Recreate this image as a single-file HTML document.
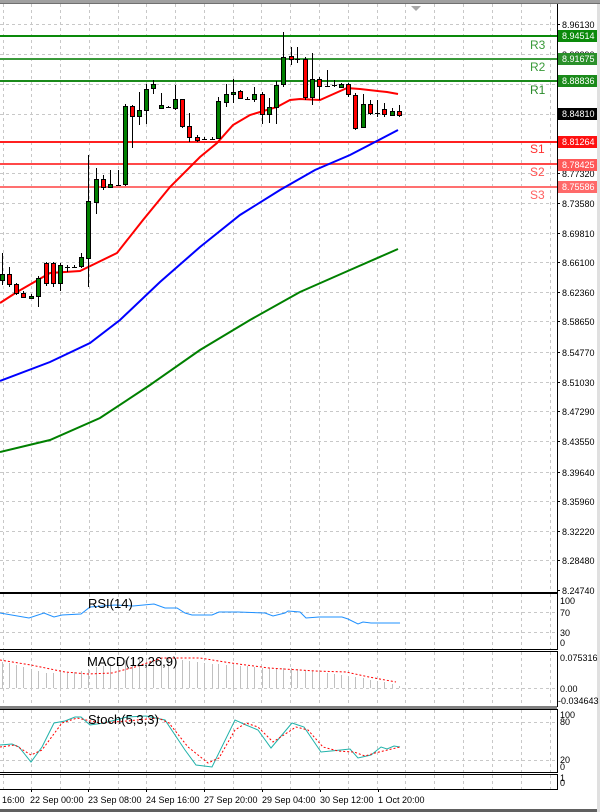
<!DOCTYPE html>
<html><head><meta charset="utf-8"><style>
body{margin:0;background:#fff;width:600px;height:812px;overflow:hidden}
svg{display:block;font-family:"Liberation Sans",sans-serif}
</style></head><body>
<svg width="600" height="812" viewBox="0 0 600 812" xmlns="http://www.w3.org/2000/svg">
<rect width="600" height="812" fill="#fff"/>
<rect x="0" y="0" width="600" height="4" fill="#a0a0a0"/>
<rect x="0" y="3" width="600" height="1" fill="#707070"/>
<polygon points="411,6 421,6 416,11" fill="#a8a8a8"/>
<!-- grid -->
<g stroke="#c8c8c8" stroke-dasharray="3,3" stroke-width="1">
<path d="M3.5 4V592M31.5 4V592M60.5 4V592M89.5 4V592M118.5 4V592M146.5 4V592M175.5 4V592M204.5 4V592M233.5 4V592M261.5 4V592M290.5 4V592M319.5 4V592M348.5 4V592M377.5 4V592M405.5 4V592M434.5 4V592M463.5 4V592M492.5 4V592M521.5 4V592M550.5 4V592"/>
<path d="M0 24.5H557M0 54.5H557M0 84.5H557M0 114.5H557M0 173.5H557M0 203.5H557M0 233.5H557M0 262.5H557M0 292.5H557M0 321.5H557M0 352.5H557M0 382.5H557M0 411.5H557M0 441.5H557M0 472.5H557M0 501.5H557M0 531.5H557M0 560.5H557"/>
<path d="M3.5 594V649M31.5 594V649M60.5 594V649M89.5 594V649M118.5 594V649M146.5 594V649M175.5 594V649M204.5 594V649M233.5 594V649M261.5 594V649M290.5 594V649M319.5 594V649M348.5 594V649M377.5 594V649M405.5 594V649M434.5 594V649M463.5 594V649M492.5 594V649M521.5 594V649M550.5 594V649"/>
<path d="M3.5 652V706M31.5 652V706M60.5 652V706M89.5 652V706M118.5 652V706M146.5 652V706M175.5 652V706M204.5 652V706M233.5 652V706M261.5 652V706M290.5 652V706M319.5 652V706M348.5 652V706M377.5 652V706M405.5 652V706M434.5 652V706M463.5 652V706M492.5 652V706M521.5 652V706M550.5 652V706"/>
<path d="M3.5 710V772M31.5 710V772M60.5 710V772M89.5 710V772M118.5 710V772M146.5 710V772M175.5 710V772M204.5 710V772M233.5 710V772M261.5 710V772M290.5 710V772M319.5 710V772M348.5 710V772M377.5 710V772M405.5 710V772M434.5 710V772M463.5 710V772M492.5 710V772M521.5 710V772M550.5 710V772"/>
<path d="M3.5 775V789M31.5 775V789M60.5 775V789M89.5 775V789M118.5 775V789M146.5 775V789M175.5 775V789M204.5 775V789M233.5 775V789M261.5 775V789M290.5 775V789M319.5 775V789M348.5 775V789M377.5 775V789M405.5 775V789M434.5 775V789M463.5 775V789M492.5 775V789M521.5 775V789M550.5 775V789"/>
<path d="M0 612.5H557M0 632.5H557M0 688.5H557M0 722.5H557M0 760.5H557"/>
</g>
<!-- S/R lines -->
<rect x="0" y="35" width="557" height="2" fill="#0a8a0a"/>
<rect x="0" y="58" width="557" height="2" fill="#3a9a3a"/>
<rect x="0" y="80" width="557" height="2" fill="#1a8a1a"/>
<rect x="0" y="141" width="557" height="2" fill="#ff2020"/>
<rect x="0" y="163" width="557" height="2" fill="#ff4848"/>
<rect x="0" y="186" width="557" height="2" fill="#ff7070"/>
<g font-size="12" >
<text x="530" y="49" fill="#3a9a3a">R3</text>
<text x="530" y="71" fill="#3a9a3a">R2</text>
<text x="530" y="94" fill="#2a8a2a">R1</text>
<text x="530" y="153" fill="#ff3030">S1</text>
<text x="530" y="176" fill="#ff5050">S2</text>
<text x="530" y="199" fill="#ff6060">S3</text>
</g>
<!-- MAs -->
<polyline fill="none" stroke="#008000" stroke-width="2" points="0,452 50,440 100,418 150,385 200,350 250,320 300,292 350,270 398,249"/>
<polyline fill="none" stroke="#0000ff" stroke-width="2" points="0,381 50,362 90,343 120,320 160,282 200,247 240,215 280,190 315,170 350,155 398,130"/>
<polyline fill="none" stroke="#ff0000" stroke-width="2" points="0,303 17,292 50,273 80,271 117,253 143,220 170,187 200,157 217,143 233,125 250,115 277,107 290,100 300,99 320,100 347,88 360,89 387,92 398,94"/>
<!-- candles wicks -->
<path stroke="#000" stroke-width="1" fill="none" d="M2.5 253V285M9.5 267V287M16.5 283V295M23.5 291V298M31.5 294V299M38.5 276V307M46.5 262V286M53.5 262V287M60.5 263V291M67.5 265V272M74.5 265V268M81.5 253V268M88.5 155V287M96.5 168V214M103.5 175V190M110.5 170V188M118.5 170V186M125.5 104V186M132.5 105V148M139.5 92V125M146.5 84V124M153.5 80V94M161.5 93V109M168.5 106V108M175.5 85V110M182.5 99V128M189.5 113V142M197.5 135V142M204.5 137V140M212.5 137V140M218.5 97V139M226.5 84V107M233.5 79V103M240.5 90V99M247.5 97V100M254.5 87V102M262.5 92V124M269.5 98V123M276.5 81V124M283.5 32V87M291.5 47V65M297.5 47V63M305.5 57V100M312.5 53V105M319.5 77V100M327.5 70V87M334.5 80V87M341.5 83V88M348.5 83V97M355.5 93V130M363.5 94V128M370.5 100V115M377.5 100V117M384.5 103V117M392.5 108V116M399.5 105V117
M65 267.5H70M72 267.5H77M116 185.5H121M166 107.5H171M202 139.5H207M210 139.5H215M245 99.5H250M295 59.5H300M325 86.5H330M332 85.5H337M375 113.5H380"/>
<g stroke="#000" stroke-width="1" fill="#008000">
<rect x="0.5" y="274.5" width="4" height="6"/><rect x="29.5" y="296.5" width="4" height="2"/><rect x="36.5" y="278.5" width="4" height="18"/><rect x="58.5" y="265.5" width="4" height="18"/><rect x="79.5" y="257.5" width="4" height="9"/><rect x="86.5" y="201.5" width="4" height="57"/><rect x="94.5" y="179.5" width="4" height="23"/><rect x="108.5" y="184.5" width="4" height="3"/><rect x="123.5" y="106.5" width="4" height="78"/><rect x="137.5" y="110.5" width="4" height="6"/><rect x="144.5" y="89.5" width="4" height="21"/><rect x="151.5" y="84.5" width="4" height="4"/><rect x="159.5" y="105.5" width="4" height="3"/><rect x="173.5" y="99.5" width="4" height="9"/><rect x="216.5" y="101.5" width="4" height="37"/><rect x="224.5" y="94.5" width="4" height="8"/><rect x="231.5" y="92.5" width="4" height="2"/><rect x="252.5" y="94.5" width="4" height="5"/><rect x="267.5" y="107.5" width="4" height="7"/><rect x="274.5" y="85.5" width="4" height="22"/><rect x="281.5" y="57.5" width="4" height="27"/><rect x="310.5" y="79.5" width="4" height="18"/><rect x="339.5" y="84.5" width="4" height="3"/><rect x="361.5" y="104.5" width="4" height="23"/><rect x="390.5" y="111.5" width="4" height="4"/>
</g>
<g stroke="#000" stroke-width="1" fill="#ff0000">
<rect x="7.5" y="274.5" width="4" height="10"/><rect x="14.5" y="284.5" width="4" height="9"/><rect x="21.5" y="293.5" width="4" height="4"/><rect x="44.5" y="263.5" width="4" height="20"/><rect x="51.5" y="263.5" width="4" height="20"/><rect x="101.5" y="179.5" width="4" height="8"/><rect x="130.5" y="106.5" width="4" height="10"/><rect x="180.5" y="99.5" width="4" height="27"/><rect x="187.5" y="126.5" width="4" height="11"/><rect x="195.5" y="137.5" width="4" height="3"/><rect x="238.5" y="91.5" width="4" height="7"/><rect x="260.5" y="94.5" width="4" height="20"/><rect x="289.5" y="56.5" width="4" height="3"/><rect x="303.5" y="59.5" width="4" height="38"/><rect x="317.5" y="79.5" width="4" height="7"/><rect x="346.5" y="84.5" width="4" height="10"/><rect x="353.5" y="95.5" width="4" height="33"/><rect x="368.5" y="104.5" width="4" height="9"/><rect x="382.5" y="109.5" width="4" height="5"/><rect x="397.5" y="111.5" width="4" height="4"/>
</g>
<!-- panel borders -->
<g fill="none" stroke="#000" stroke-width="1">
<path d="M557.5 4V592.5H0"/>
<path d="M0 593.5H557.5V649.5H0"/>
<path d="M0 651.5H557.5V706.5H0"/>
<path d="M0 709.5H557.5V772.5H0"/>
<path d="M0 774.5H557.5V789.5H0"/>
</g>
<rect x="0" y="706" width="557" height="3" fill="#808080"/>
<rect x="0" y="809" width="600" height="3" fill="#606060"/>
<rect x="597" y="4" width="3" height="808" fill="#e0e0e0"/>
<!-- price axis -->
<g stroke="#000"><path d="M557 24.5h3M557 54.5h3M557 173.5h3M557 203.5h3M557 233.5h3M557 262.5h3M557 292.5h3M557 321.5h3M557 352.5h3M557 382.5h3M557 411.5h3M557 441.5h3M557 472.5h3M557 501.5h3M557 531.5h3M557 560.5h3M557 590.5h3"/></g>
<g font-size="9" fill="#000">
<text x="562" y="28">8.96130</text><text x="562" y="58">8.92290</text><text x="562" y="177">8.77320</text><text x="562" y="207">8.73580</text><text x="562" y="237">8.69810</text><text x="562" y="266">8.66100</text><text x="562" y="296">8.62360</text><text x="562" y="325">8.58650</text><text x="562" y="356">8.54770</text><text x="562" y="386">8.51030</text><text x="562" y="415">8.47290</text><text x="562" y="445">8.43550</text><text x="562" y="476">8.39640</text><text x="562" y="505">8.35960</text><text x="562" y="535">8.32220</text><text x="562" y="564">8.28480</text><text x="562" y="594">8.24740</text>
<text x="560" y="604">100</text><text x="560" y="616">70</text><text x="560" y="636">30</text><text x="560" y="646">0</text>
<text x="560" y="661">0.075316</text><text x="560" y="692">0.00</text><text x="558" y="704">-0.034643</text>
<text x="560" y="718">100</text><text x="560" y="725">80</text><text x="560" y="763">20</text><text x="560" y="770">0</text>
<text x="560" y="781">1</text><text x="560" y="786">0</text>
</g>
<rect x="558" y="30" width="39" height="12" fill="#0a8a0a"/>
<rect x="558" y="53" width="39" height="12" fill="#2a902a"/>
<rect x="558" y="75" width="39" height="12" fill="#1a8a1a"/>
<rect x="558" y="108" width="39" height="12" fill="#000"/>
<rect x="558" y="136" width="39" height="12" fill="#ff1010"/>
<rect x="558" y="159" width="39" height="12" fill="#ff5858"/>
<rect x="558" y="181" width="39" height="12" fill="#ff6a6a"/>
<g font-size="9" fill="#fff">
<text x="562" y="39">8.94514</text><text x="562" y="62">8.91675</text><text x="562" y="84">8.88836</text><text x="562" y="117">8.84810</text><text x="562" y="145">8.81264</text><text x="562" y="168">8.78425</text><text x="562" y="190">8.75586</text>
</g>
<!-- RSI -->
<polyline fill="none" stroke="#1e90ff" stroke-width="1" points="0,613 29,618 44,613 54,617 62,615 81,614 90,607 115,605 133,606 154,604 165,608 177,608 185,613 192,615 212,615 219,612 238,612 265,613 273,616 285,613 288,611 300,612 306,618 319,617 342,617 348,619 358,624 363,622 371,623 388,623 400,623"/>
<text x="88" y="608" font-size="13" fill="#000">RSI(14)</text>
<!-- MACD -->
<g stroke="#c0c0c0" stroke-width="1"><path d="M2.5 662V688M9.5 663V688M16.5 665V688M23.5 667V688M31.5 669V688M38.5 671V688M46.5 673V688M53.5 673V688M60.5 673V688M67.5 673V688M74.5 672V688M81.5 671V688M88.5 669V688M96.5 667V688M103.5 666V688M110.5 664V688M118.5 662V688M125.5 660V688M132.5 659V688M139.5 658V688M146.5 658V688M153.5 658V688M161.5 658V688M168.5 658V688M175.5 659V688M182.5 660V688M189.5 661V688M197.5 662V688M204.5 663V688M212.5 664V688M218.5 664V688M226.5 665V688M233.5 665V688M240.5 666V688M247.5 666V688M254.5 667V688M262.5 668V688M269.5 668V688M276.5 668V688M283.5 668V688M291.5 668V688M297.5 669V688M305.5 670V688M312.5 671V688M319.5 672V688M327.5 673V688M334.5 674V688M341.5 675V688M348.5 676V688M355.5 677V688M363.5 678V688M370.5 680V688M377.5 681V688M384.5 682V688M392.5 684V688M399.5 686V688"/></g>
<polyline fill="none" stroke="#ff0000" stroke-width="1" stroke-dasharray="2,2" points="0,660 31,665 65,672 88,674 112,673 135,667 162,658 200,658 231,663 269,668 315,671 346,672 369,677 396,682"/>
<text x="87" y="666" font-size="13" fill="#000">MACD(12,26,9)</text>
<!-- Stoch -->
<polyline fill="none" stroke="#20b2aa" stroke-width="1" points="0,745 12,744 19,747 31,762 42,747 54,723 65,721 75,717 81,717 90,725 104,723 127,717 146,716 165,720 185,750 196,765 212,767 235,720 246,725 258,730 271,748 292,723 304,727 321,752 331,751 350,749 358,758 371,755 381,747 387,749 394,746 400,747"/>
<polyline fill="none" stroke="#ff0000" stroke-width="1" stroke-dasharray="2,2" points="0,747 15,745 31,755 42,750 62,723 77,718 100,723 127,721 158,718 169,723 188,747 208,763 219,758 235,730 246,723 258,727 273,742 296,727 308,730 323,747 338,751 354,752 365,756 375,753 400,747"/>
<text x="88" y="724" font-size="13" fill="#000">Stoch(5,3,3)</text>
<!-- time axis -->
<g stroke="#000"><path d="M31.5 789v3M88.5 789v3M146.5 789v3M204.5 789v3M262.5 789v3M320.5 789v3M378.5 789v3"/></g>
<g font-size="9" fill="#000">
<text x="2" y="803">16:00</text><text x="30" y="803">22 Sep 00:00</text><text x="88" y="803">23 Sep 08:00</text><text x="146" y="803">24 Sep 16:00</text><text x="204" y="803">27 Sep 20:00</text><text x="262" y="803">29 Sep 04:00</text><text x="320" y="803">30 Sep 12:00</text><text x="378" y="803">1 Oct 20:00</text>
</g>
</svg>
</body></html>
